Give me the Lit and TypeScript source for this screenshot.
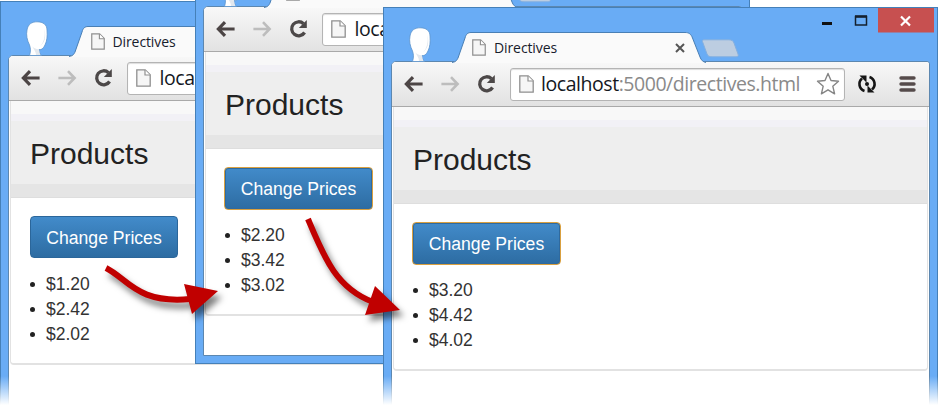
import { LitElement, html, svg, css } from "lit";
import { customElement, property } from "lit/decorators.js";

const docIcon = html`<svg class="doc" width="15" height="18" viewBox="0 0 15 18">
  <path d="M.8.8h8.4l5 5v11.4H.8z" fill="#f6f6f6" stroke="#8f8f8f" stroke-width="1.3" />
  <path d="M9 1v5h5" fill="#fff" stroke="#8f8f8f" stroke-width="1.2" />
</svg>`;

const arrow = (color: string, flip: boolean) => html`<svg width="20" height="18" viewBox="0 0 20 18">
  ${svg`<path d="M18.6 9H3M9 2.2L2.4 9L9 15.8" transform=${flip ? "translate(20 0) scale(-1 1)" : ""}
    fill="none" stroke=${color} stroke-width=${flip ? 2.6 : 3.2} />`}
</svg>`;

@customElement("browser-window")
class BrowserWindow extends LitElement {
  @property({ type: Array }) prices: string[] = [];
  @property({ type: Boolean }) focused = false;
  @property() name = "";
  @property() path = "";

  static styles = css`
    :host {
      display: flex;
      flex-direction: column;
      box-sizing: border-box;
      isolation: isolate;
      width: 555px;
      height: 412px;
      padding: 0 7px 7px;
      border: 1px solid #4580b8;
      background: #69acf5;
      font-family: "Liberation Sans", Arial, sans-serif;
    }
    svg { display: block; flex: none; }
    .title { display: flex; height: 54px; flex: none; align-items: flex-start; position: relative; z-index: 1; }
    .avatar { margin: 19px 0 0 17px; }
    .tab { display: grid; width: 254px; height: 31px; margin: 24px 0 0 20px; }
    .tab > * { grid-area: 1 / 1; }
    .tabrow { display: flex; align-items: center; padding: 0 21px 0 20px; height: 29px; margin-top: 1px; position: relative; }
    .tabrow .doc { width: 14px; height: 17px; margin-left: var(--nudge, 0px); }
    .name { flex: 1; margin-left: 8px; font: 14px/20px "Open Sans", "Noto Sans", sans-serif; letter-spacing: -0.1px; color: #17202c; }
    .newtab { margin: 31px 0 0 -6px; }
    .controls { display: flex; margin-left: auto; margin-right: -4px; }
    .inner { flex: 1; display: flex; flex-direction: column; background: #fff; border: 1px solid #5c87b0; border-radius: 5px 3px 0 0; margin-top: -1px; min-height: 0; }
    .bar { display: flex; align-items: center; flex: none; height: 45px; padding: 0 12px 0 12px; background: linear-gradient(#f8f8f8, #e2e2e2); border-bottom: 1px solid #a9a9a9; box-sizing: border-box; border-radius: 4px 3px 0 0; }
    .fwd { margin: 0 16px 0 16px; }
    .url { display: flex; align-items: center; box-sizing: border-box; width: 335px; height: 33px; margin-left: 12px; padding: 0 4px 0 8px; border: 1px solid #b4b4b4; border-radius: 3px; background: #fff; box-shadow: inset 0 1px 1px #ddd; }
    .addr { flex: 1; margin-left: calc(7px + var(--nudge, 0px)); white-space: nowrap; font: 19.5px/28px "Open Sans", "Noto Sans", sans-serif; letter-spacing: -0.45px; color: #8a8a8a; }
    .addr b { font-weight: 400; color: #14181e; }
    .sync { margin-left: 12px; }
    .menu { margin-left: 22px; }
    .panel { margin: 0 1px; height: 264px; box-sizing: border-box; flex: none; border: 1px solid #e2e2e2; border-width: 0 1px 2px; border-radius: 0 0 4px 4px; }
    .hero { height: 97px; box-sizing: border-box; padding: 35px 19px 0; background: linear-gradient(#f8f8f8 0 13px, #f2f1f6 13px 20px, #eee 20px 83px, #e5e5e5 83px); border-bottom: 1px solid #dedede; }
    h1 { margin: 0; font-size: 30px; line-height: 36px; font-weight: 400; color: #222; }
    button { display: block; box-sizing: border-box; margin: 18px 0 0 19px; width: 148px; height: 42px; padding: 1px 0 0; border: 1px solid #2b669a; border-radius: 4px; background: linear-gradient(#428bca, #2d6ca2); font: 17.6px/38px "Liberation Sans", Arial, sans-serif; color: #fff; white-space: nowrap; }
    .focus { width: 149px; height: 43px; margin-left: 18px; margin-bottom: -1px; border-color: #d9a040; box-shadow: inset 0 0 0 1px #2f6a9f; }
    ul { list-style: none; margin: 14px 0 0 19px; padding: 0; font-size: 17.5px; line-height: 25px; color: #333; }
    li { display: flex; align-items: center; gap: 11px; }
    li::before { content: ""; width: 5px; height: 5px; border-radius: 50%; background: #222; }
  `;

  render() {
    return html`
      <div class="title">
        <svg class="avatar" width="24" height="35" viewBox="0 0 24 35">
          <path d="M4.500 34.500C6 30 5.500 27 4.500 24C2 19 1 14 2 9C3 3 7 .8 12 .8C18 .8 22 3.500 22 9C22.500 15 22 20 20 24C18 28 16 29 14 28.500C14 31 15 33 16.500 34.500Z" fill="#fff" stroke="#5c93cb" stroke-width=".8" />
          <path d="M6 24C8 27 11 28 14 28.500L15 34H11C11 31 9 28 6 24Z" fill="#e3e8ee" />
          <path d="M19 7C21 14 19 22 15 25C19 23 22 16 19 7Z" fill="#dbe1e8" />
        </svg>
        <div class="tab">
          <svg width="254" height="31" viewBox="0 0 254 31">
            <path d="M0 30.500C4 30 5 28 6 26L13 6C14 2 16 .5 19 .5H233C237 .5 239 2 240.500 6L248 25C249 28 251 30 254 30.500V31H0Z" fill="#fafafa" />
            <path d="M0 30.500C4 30 5 28 6 26L13 6C14 2 16 .5 19 .5H233C237 .5 239 2 240.500 6L248 25C249 28 251 30 254 30.500" fill="none" stroke="#497fb5" />
          </svg>
          <div class="tabrow">${docIcon}<span class="name">${this.name}</span>
            <svg width="10" height="10" viewBox="0 0 10 10"><path d="M1 1L9 9M9 1L1 9" stroke="#555" stroke-width="2" /></svg>
          </div>
        </div>
        <svg class="newtab" width="40" height="20" viewBox="0 0 40 20">
          <path d="M4 .8H29C32 .8 33 2 34 4L38 15C38.800 17 38 17.800 36 17.800H12C9 17.800 8 17 7 15L3 4C2 1.800 2 .8 4 .8Z" fill="#bccde1" stroke="#83afe0" />
        </svg>
        <div class="controls">
          <svg width="112" height="25" viewBox="0 0 112 25">
            <path d="M56 0H112V24.500H56Z" fill="#c75050" />
            <path d="M0 15.500H10" stroke="#111" stroke-width="3" />
            <path d="M33.500 8.500H44.500V17H33.500Z" fill="none" stroke="#14202e" stroke-width="1.500" />
            <path d="M33 8.500H45" stroke="#14202e" stroke-width="2.500" />
            <path d="M79 8.500L88 17.500M88 8.500L79 17.500" stroke="#fff" stroke-width="2.200" />
          </svg>
        </div>
      </div>
      <div class="inner">
        <div class="bar">
          ${arrow("#4c4545", false)}
          <div class="fwd">${arrow("#bdbdbd", true)}</div>
          <svg width="22" height="20" viewBox="0 0 22 20">
            <path d="M15.500 4.700A7 7 0 1 0 16.600 13.500" fill="none" stroke="#4c4848" stroke-width="3.300" />
            <path d="M18.800 1V9H10.800Z" fill="#4c4848" />
          </svg>
          <div class="url">${docIcon}<span class="addr"><b>localhost</b>${this.path}</span>
            <svg width="24" height="24" viewBox="0 0 24 24"><path d="M12 1.500L15 8.500L22.500 9.200L16.800 14.200L18.600 21.800L12 17.800L5.400 21.800L7.200 14.200L1.500 9.200L9 8.500Z" fill="#fff" stroke="#858585" stroke-width="1.400" stroke-linejoin="round" /></svg>
          </div>
          <svg class="sync" width="20" height="20" viewBox="0 0 20 20">
            <g fill="none" stroke="#151515" stroke-width="2.600"><path d="M7.500 17A7.300 7.300 0 0 1 5 4.500" /><path d="M12.500 3A7.300 7.300 0 0 1 15 15.500" /></g>
            <path d="M2.500 1.500H9.500V8.500ZM17.500 18.500H10.500V11.500Z" fill="#151515" /><circle cx="10" cy="10" r="2" fill="#151515" />
          </svg>
          <svg class="menu" width="17" height="18" viewBox="0 0 17 18"><path d="M2 3H15M2 9H15M2 15H15" stroke="#554b4b" stroke-width="3.400" stroke-linecap="round" /></svg>
        </div>
        <div class="panel">
          <div class="hero"><h1>Products</h1></div>
          <button class=${this.focused ? "focus" : ""}>Change Prices</button>
          <ul>${this.prices.map((p) => html`<li>${p}</li>`)}</ul>
        </div>
      </div>`;
  }
}

@customElement("app-root")
class AppRoot extends LitElement {
  static styles = css`
    :host { display: block; position: relative; width: 938px; height: 415px; overflow: hidden; background: #fff; }
    browser-window { position: absolute; }
    .first { left: 0; top: 1px; height: 440px; --nudge: 1.5px; }
    .second { left: 195px; top: -48px; --nudge: 1.5px; }
    .third { left: 383px; top: 7px; height: 440px; }
    .fade { position: absolute; left: 0; right: 0; top: 376px; bottom: 0; background: linear-gradient(rgba(255, 255, 255, 0), #fff 29px); }
    .arrows { position: absolute; left: 0; top: 0; filter: drop-shadow(4px 6px 3px rgba(0, 0, 0, 0.5)); }
  `;

  render() {
    return html`
      <browser-window class="first" name="Directives" .prices=${["$1.20", "$2.42", "$2.02"]}></browser-window>
      <browser-window class="second" focused .prices=${["$2.20", "$3.42", "$3.02"]}></browser-window>
      <browser-window class="third" focused name="Directives" path=":5000/directives.html" .prices=${["$3.20", "$4.42", "$4.02"]}></browser-window>
      <div class="fade"></div>
      <svg class="arrows" width="938" height="415" viewBox="0 0 938 415">
        <g fill="none" stroke="#c00000" stroke-width="6">
          <path d="M106 268C128 279 137 304 190 299" />
          <path d="M308 219C324 257 336 288 373 302" />
        </g>
        <path d="M184 284L218 291L192 314ZM375 286L400 310L365 315Z" fill="#c00000" />
      </svg>`;
  }
}
